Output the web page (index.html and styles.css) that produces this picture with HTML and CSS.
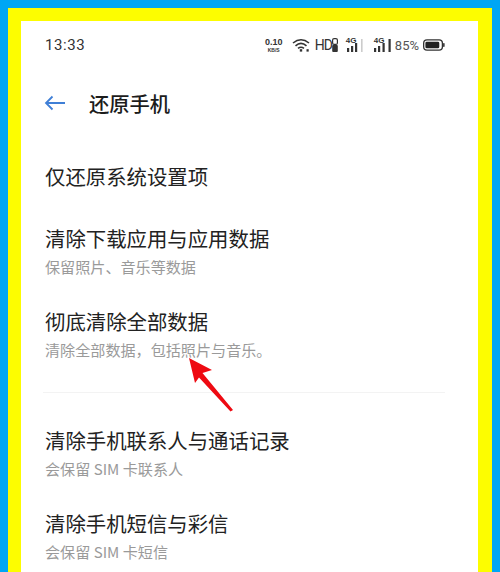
FILE: index.html
```html
<!DOCTYPE html>
<html lang="zh">
<head>
<meta charset="utf-8">
<title>还原手机</title>
<link rel="stylesheet" href="styles.css">
</head>
<body>
<div class="frame">
  <div class="screen">
    <div class="status">
      <span class="time">13:33</span>
      <div class="status-icons">
        <span class="speed"><b>0.10</b><i>KB/S</i></span>
        <svg class="wifi" width="18" height="14" viewBox="0 0 18 14"><path d="M1 5 Q9 -1.500 17 5M3.500 7.800 Q9 3 14.500 7.800M6 10.400 Q9 8 12 10.400" fill="none" stroke="#333" stroke-width="1.600"/><rect x="7.800" y="11.200" width="2.400" height="2.400" fill="#333"/><rect x="14.500" y="11.200" width="2.200" height="2.400" fill="#333"/></svg>
        <span class="hd">HD</span>
        <svg class="hd-bars" width="6" height="14" viewBox="0 0 6 14"><rect x="0.600" y="0.600" width="4.800" height="5.800" rx="1.500" fill="none" stroke="#333" stroke-width="1.200"/><rect x="0.200" y="7" width="5.600" height="7" rx="1" fill="#333"/></svg>
        <span class="sig sig-first">
          <span class="net">4G</span>
          <svg width="20" height="14" viewBox="0 0 20 14"><rect x="1" y="10" width="2.200" height="4" fill="#333"/><rect x="5" y="8" width="2.200" height="6" fill="#333"/><rect x="9" y="5" width="2.200" height="9" fill="#333"/><rect x="15" y="1" width="1.600" height="13" fill="#ccc"/></svg>
        </span>
        <span class="sig">
          <span class="net">4G</span>
          <svg width="18" height="14" viewBox="0 0 18 14"><rect x="0" y="10" width="2.200" height="4" fill="#333"/><rect x="4" y="8" width="2.200" height="6" fill="#333"/><rect x="8.500" y="5" width="2.200" height="9" fill="#333"/><rect x="14.500" y="1" width="2.200" height="13" fill="#333"/></svg>
        </span>
        <span class="pct">85%</span>
        <svg class="battery" width="22" height="12" viewBox="0 0 23 12"><rect x="0.700" y="0.700" width="19.600" height="10.600" rx="3.500" fill="none" stroke="#333" stroke-width="1.400"/><rect x="2.500" y="2.500" width="14.500" height="7" rx="1.500" fill="#222"/><rect x="21" y="4" width="1.600" height="4" rx="0.800" fill="#333"/></svg>
      </div>
    </div>
    <header class="nav">
      <svg class="back" width="22" height="16" viewBox="0 0 22 16"><path d="M21 8H2M8.500 1.500 2 8l6.500 6.500" fill="none" stroke="#3f7fd6" stroke-width="1.800"/></svg>
      <h1 class="page-title">还原手机</h1>
    </header>
    <ul class="group group-top">
      <li class="item item-single"><span class="item-title">仅还原系统设置项</span></li>
      <li class="item"><span class="item-title">清除下载应用与应用数据</span><span class="item-sub">保留照片、音乐等数据</span></li>
      <li class="item"><span class="item-title">彻底清除全部数据</span><span class="item-sub">清除全部数据，包括照片与音乐。</span></li>
    </ul>
    <hr class="divider">
    <ul class="group">
      <li class="item"><span class="item-title">清除手机联系人与通话记录</span><span class="item-sub">会保留 SIM 卡联系人</span></li>
      <li class="item"><span class="item-title">清除手机短信与彩信</span><span class="item-sub">会保留 SIM 卡短信</span></li>
    </ul>
    <svg class="arrow" width="52" height="58" viewBox="0 0 52 58"><path d="M2 1 L25 13 L15.500 16 L46 53 L43.500 54.500 L12 20.500 L8 26 Z" fill="#ee0a12"/></svg>
  </div>
</div>
</body>
</html>
```
FILE: styles.css
```css
* { box-sizing: border-box; }
html, body { margin: 0; height: 572px; overflow: hidden; }
body {
  background: #00a6f4;
  padding: 8px 8px 0;
  font-family: "Noto Sans CJK SC", "Liberation Sans", sans-serif;
}
.frame {
  height: 564px;
  background: #fdfd00;
  padding: 13px 14px 0 13px;
}
.screen {
  position: relative;
  height: 551px;
  background: #fff;
  padding: 0 33px 0 24px;
  overflow: hidden;
}
.status {
  height: 48px;
  display: flex;
  align-items: center;
  justify-content: space-between;
  color: #333;
}
.time { font: 15px "Roboto", sans-serif; letter-spacing: 0.6px; }
.status-icons { display: flex; align-items: center; }
.speed { display: flex; flex-direction: column; align-items: center; width: 20px; font-family: "Liberation Sans", sans-serif; color: #333; margin-right: 8px; }
.speed b { font-size: 9px; line-height: 9px; }
.speed i { font-size: 5px; line-height: 6px; font-style: normal; font-weight: 700; }
.wifi { margin-right: 5px; }
.hd { font: 14px "Roboto", sans-serif; letter-spacing: -1px; }
.hd-bars { margin-right: 8px; }
.sig { position: relative; display: flex; width: 18px; height: 14px; margin-right: 3px; }
.sig-first { width: 20px; margin-right: 8px; }
.net { position: absolute; left: 0; top: -1px; font: 700 8px/8px "Liberation Sans", sans-serif; color: #333; }
.pct { font: 13px "Roboto", sans-serif; color: #555; margin-right: 4px; }
.nav { display: flex; align-items: center; height: 40px; margin-top: 14px; }
.back { margin-left: -1px; margin-right: 23px; }
.page-title { margin: 0; font-size: 20.300px; font-weight: 500; color: #1c1c1c; line-height: 40px; }
.group { list-style: none; margin: 0; padding: 0; }
.group-top { margin-top: 38px; }
.item { display: flex; flex-direction: column; height: 83px; }
.item-single { height: 62px; }
.item-title { font-size: 20.400px; line-height: 30px; color: #222; }
.item-sub { font-size: 15.100px; line-height: 22px; margin-top: 2px; color: #9a9a9a; }
.divider { height: 1px; margin: 3px 0 32px -2px; border: 0; background: #f3f3f3; }
.arrow { position: absolute; left: 166px; top: 336px; }
```
